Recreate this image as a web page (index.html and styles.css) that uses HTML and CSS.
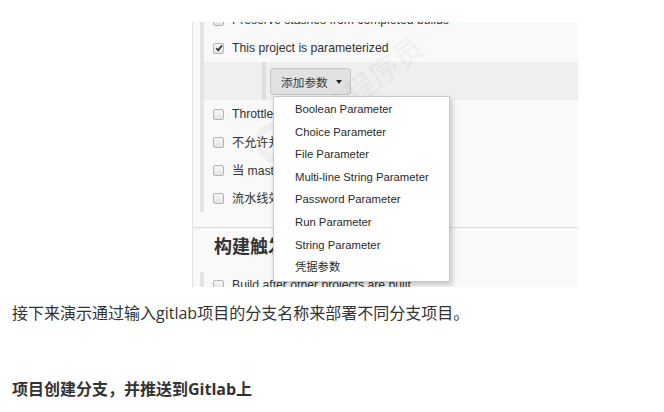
FILE: index.html
```html
<!DOCTYPE html>
<html lang="zh">
<head>
<meta charset="utf-8">
<title>Jenkins 参数化构建</title>
<link rel="stylesheet" href="styles.css">
</head>
<body>
<div class="article">
  <div class="shot">
    <div class="shot-inner">
      <div class="group">
        <div class="row"><span class="cb"></span><span>Preserve stashes from completed builds</span></div>
        <div class="row"><span class="cb checked"><svg viewBox="0 0 10 10" width="10" height="10"><path d="M2.2 5.2 L4.2 7.2 L7.9 2.6" fill="none" stroke="#222" stroke-width="1.6"/></svg></span><span>This project is parameterized</span></div>
        <div class="btnrow">
          <div class="btnwrap">
            <button class="addbtn" type="button"><span>添加参数</span><span class="caret"></span></button>
          </div>
        </div>
        <div class="row"><span class="cb"></span><span>Throttle builds</span></div>
        <div class="row"><span class="cb"></span><span>不允许并发构建</span></div>
        <div class="row"><span class="cb"></span><span>当 master 重启后，不允许恢复流水线</span></div>
        <div class="row"><span class="cb"></span><span>流水线效率、持久保存设置覆盖</span></div>
      </div>
      <div class="divider"></div>
      <h2 class="section-title">构建触发器</h2>
      <div class="group group-bottom">
        <div class="row"><span class="cb"></span><span>Build after other projects are built</span></div>
      </div>
    </div>
    <div class="watermark">
      <span class="wm-circle"></span>
      <span class="wm-brand">黑马程序员<sup>TM</sup></span>
      <span class="wm-url">www.itheima.com</span>
    </div>
    <ul class="menu">
      <li>Boolean Parameter</li>
      <li>Choice Parameter</li>
      <li>File Parameter</li>
      <li>Multi-line String Parameter</li>
      <li>Password Parameter</li>
      <li>Run Parameter</li>
      <li>String Parameter</li>
      <li>凭据参数</li>
    </ul>
  </div>
  <p class="para">接下来演示通过输入gitlab项目的分支名称来部署不同分支项目。</p>
  <p class="subhead">项目创建分支，并推送到Gitlab上</p>
</div>
</body>
</html>
```

FILE: styles.css
```css
* { box-sizing: border-box; }

html, body {
  margin: 0;
  padding: 0;
  background: #fff;
}

body {
  font-family: "Open Sans", "Noto Sans CJK SC", sans-serif;
  color: #333;
  width: 664px;
  height: 412px;
  overflow: hidden;
}

.article {
  padding: 22px 0 0 12px;
}

.shot {
  position: relative;
  margin-left: 180px;
  width: 386px;
  height: 265px;
  overflow: hidden;
  background: #f9f9f9;
  border-left: 1px solid #e2e2e2;
  font-family: "Liberation Sans", "Noto Sans CJK SC", sans-serif;
  font-size: 12.2px;
  color: #333;
}

.shot-inner {
  display: flex;
  flex-direction: column;
  margin-top: -16px;
}

.group {
  margin-left: 7px;
  border-left: 4px solid #e3e3e3;
  display: flex;
  flex-direction: column;
}

.row {
  height: 28px;
  display: flex;
  align-items: center;
  gap: 8px;
  padding-left: 9px;
  white-space: nowrap;
}

.cb {
  width: 11px;
  height: 11px;
  flex: none;
  border: 1px solid #b4b4b4;
  border-radius: 2px;
  background: linear-gradient(#f6f6f6, #e4e4e4);
  display: flex;
  align-items: center;
  justify-content: center;
}

.cb svg { display: block; margin: -1px; }

.btnrow {
  height: 38px;
  background: #efefef;
  display: flex;
  align-items: center;
  padding-left: 58px;
}

.btnwrap {
  border-left: 4px solid #dedede;
  height: 38px;
  display: flex;
  align-items: center;
  padding-left: 4px;
}

.addbtn {
  height: 27px;
  margin-top: 1px;
  display: flex;
  align-items: center;
  gap: 8px;
  padding: 0 8px 0 10px;
  border: 1px solid #c6c6c6;
  border-radius: 3px;
  background: #e1e1e1;
  font-family: "Liberation Sans", "Noto Sans CJK SC", sans-serif;
  font-size: 11.7px;
  color: #3a3a3a;
}

.caret {
  width: 0;
  height: 0;
  border-left: 3.5px solid transparent;
  border-right: 3.5px solid transparent;
  border-top: 4px solid #222;
}

.divider {
  height: 1px;
  background: #dcdcdc;
  margin-top: 15px;
  margin-left: -1px;
}

.section-title {
  margin: 6px 0 0 21px;
  height: 26px;
  line-height: 26px;
  font-size: 18px;
  font-weight: bold;
  color: #333;
  font-family: "Liberation Sans", "Noto Sans CJK SC", sans-serif;
}

.group-bottom {
  margin-top: 12px;
}

.group-bottom .row {
  margin-top: -1px;
}

.menu {
  position: absolute;
  left: 80px;
  top: 74px;
  width: 177px;
  height: 186px;
  margin: 0;
  padding: 1px 0 0 21px;
  list-style: none;
  background: #fff;
  border: 1px solid #c8c8c8;
  box-shadow: 2px 3px 6px rgba(0, 0, 0, 0.22);
  font-family: "Liberation Sans", "Noto Sans CJK SC", sans-serif;
  font-size: 11.3px;
  color: #2a2a2a;
}

.menu li {
  height: 22.6px;
  line-height: 22.6px;
  white-space: nowrap;
}

.watermark {
  position: absolute;
  inset: 0;
  pointer-events: none;
  color: rgba(0, 0, 0, 0.04);
}

.wm-circle {
  position: absolute;
  left: 62px;
  top: 100px;
  width: 40px;
  height: 40px;
  border-radius: 50%;
  border: 8px solid rgba(0, 0, 0, 0.035);
}

.wm-brand {
  position: absolute;
  left: 90px;
  top: 40px;
  font-size: 30px;
  font-weight: bold;
  transform: rotate(-38deg);
  white-space: nowrap;
}

.wm-brand sup { font-size: 7px; }

.wm-url {
  position: absolute;
  left: 110px;
  top: 110px;
  font-size: 16px;
  transform: rotate(-38deg);
  white-space: nowrap;
}

.para {
  margin: 13px 0 0 0;
  font-size: 16px;
  line-height: 26px;
  color: #333;
}

.subhead {
  margin: 50px 0 0 0;
  font-size: 16px;
  line-height: 26px;
  font-weight: bold;
  color: #333;
}
```
